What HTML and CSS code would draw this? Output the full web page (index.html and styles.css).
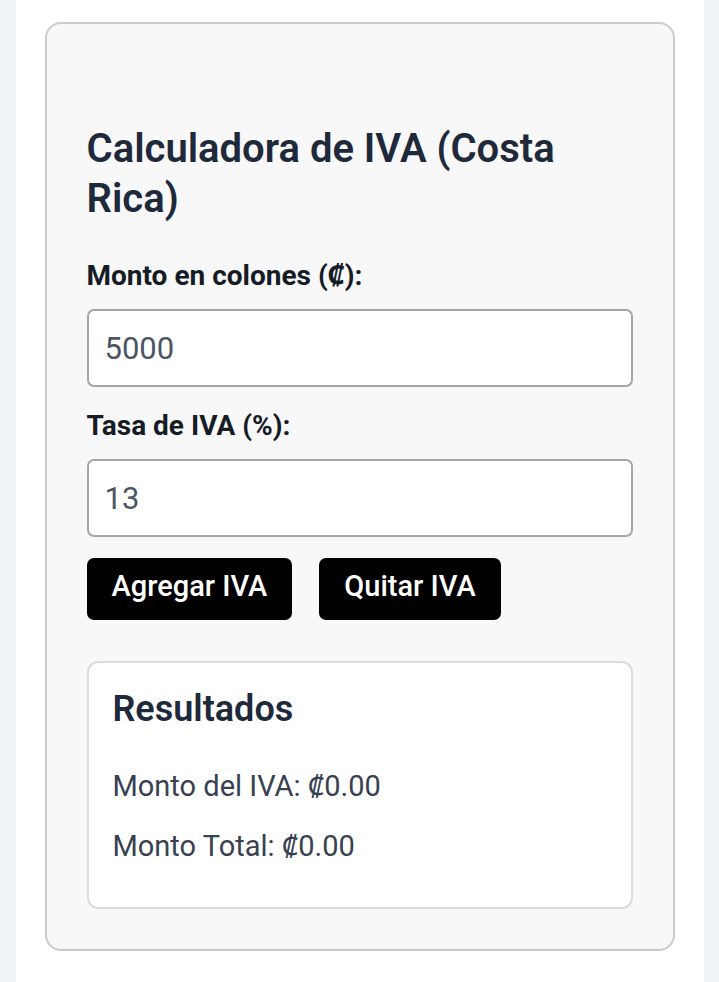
FILE: index.html
```html
<!DOCTYPE html>
<html lang="es">
<head>
<meta charset="utf-8">
<title>Calculadora de IVA (Costa Rica)</title>
<link rel="stylesheet" href="styles.css">
</head>
<body>
<div class="page">
  <div class="card">
    <h1 class="title">Calculadora de IVA (Costa Rica)</h1>
    <div class="group">
      <label class="label" for="monto">Monto en colones (₡):</label>
      <input class="field" id="monto" type="number" value="5000">
    </div>
    <div class="group group-last">
      <label class="label" for="tasa">Tasa de IVA (%):</label>
      <input class="field" id="tasa" type="number" value="13">
    </div>
    <div class="actions">
      <button class="btn" type="button">Agregar IVA</button>
      <button class="btn" type="button">Quitar IVA</button>
    </div>
    <div class="results">
      <h2 class="results-title">Resultados</h2>
      <p class="result">Monto del IVA: ₡0.00</p>
      <p class="result">Monto Total: ₡0.00</p>
    </div>
  </div>
</div>
</body>
</html>
```

FILE: styles.css
```css
html, body {
  margin: 0;
  padding: 0;
}
body {
  background: #eff4f9;
  font-family: Roboto, "Noto Sans", "Liberation Sans", sans-serif;
}
.page {
  width: 688px;
  margin: 0 auto;
  min-height: 982px;
  box-sizing: border-box;
  background: #ffffff;
  padding: 22px 29px 31px;
}
.card {
  border: 2px solid #cbcbcb;
  border-radius: 16px;
  background: #f8f8f8;
  padding: 40px;
  display: flex;
  flex-direction: column;
}
.title {
  margin: 60px 0 36px;
  font-size: 40px;
  line-height: 50px;
  font-weight: 600;
  color: #1e293b;
}
.group {
  display: flex;
  flex-direction: column;
  gap: 17px;
  margin-bottom: 23px;
}
.group-last {
  margin-bottom: 21px;
}
.label {
  font-size: 28px;
  line-height: 32px;
  font-weight: 700;
  color: #161c26;
}
.field {
  box-sizing: border-box;
  height: 78px;
  border: 2px solid #a6a6a6;
  border-radius: 7px;
  background: #ffffff;
  padding: 0 16px;
  margin: 0;
  font-family: Roboto, "Noto Sans", sans-serif;
  font-size: 31px;
  color: #4b5563;
  -moz-appearance: textfield;
}
.field::-webkit-inner-spin-button,
.field::-webkit-outer-spin-button {
  -webkit-appearance: none;
  margin: 0;
}
.actions {
  display: flex;
  gap: 27px;
  margin-bottom: 41px;
}
.btn {
  height: 62px;
  padding: 0 25px 7px;
  border: none;
  border-radius: 7px;
  background: #000000;
  color: #ffffff;
  font-family: Roboto, "Noto Sans", sans-serif;
  font-size: 29px;
  font-weight: 500;
}
.results {
  border: 2px solid #dcdcdc;
  border-radius: 11px;
  background: #ffffff;
  padding: 26px 24px 17px;
}
.results-title {
  margin: 0 0 41px;
  font-size: 36px;
  line-height: 40px;
  font-weight: 600;
  color: #1e293b;
}
.result {
  margin: 0 0 28px;
  font-size: 29px;
  line-height: 32px;
  color: #374151;
}
```
